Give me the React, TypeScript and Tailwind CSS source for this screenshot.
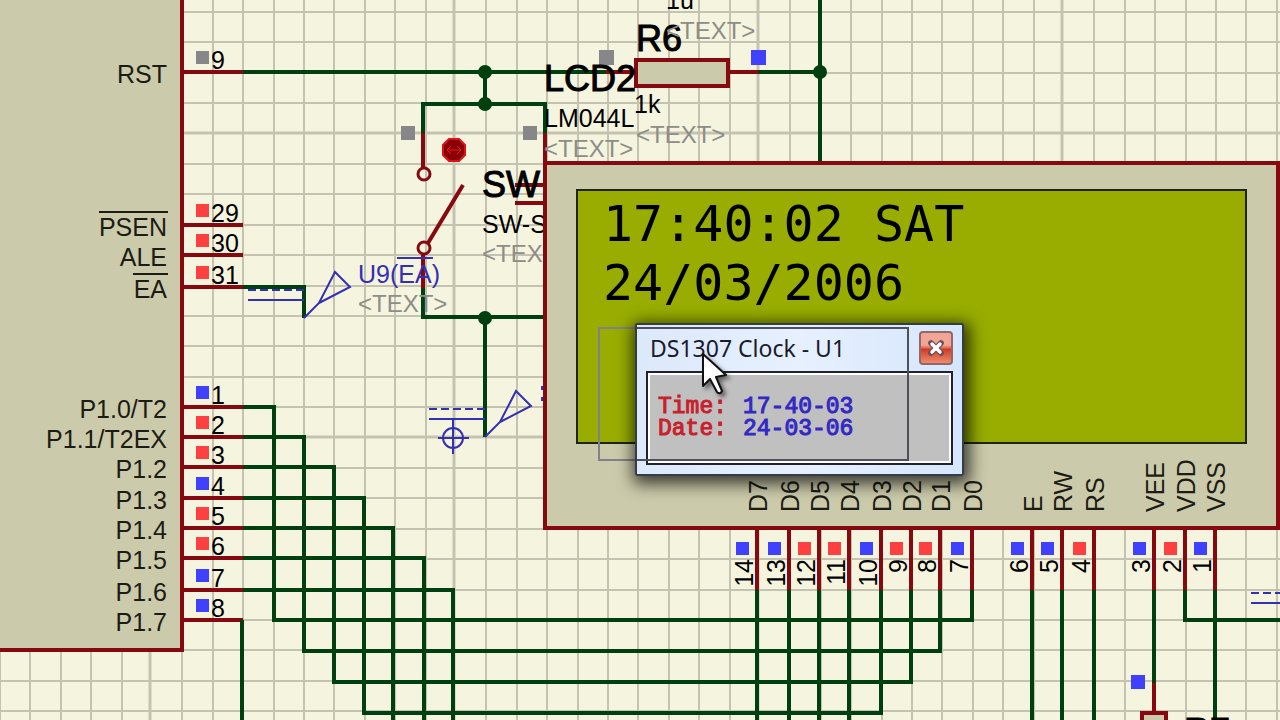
import { X } from 'lucide-react';

const WIRE = '#004010';
const PIN = '#86090f';
const PROBE = '#3430b4';
const LABEL_FONT = "font-['Liberation_Sans',Arial,sans-serif]";

type Level = 'high' | 'low' | 'float';

const LEVEL_COLOR: Record<Level, string> = {
  high: '#ff4040',
  low: '#4040ff',
  float: '#87878a',
};

const mcuPins: { name: string; num: string; y: number; level: Level; bar?: number }[] = [
  { name: 'RST', num: '9', y: 72, level: 'float' },
  { name: 'PSEN', num: '29', y: 225, level: 'high', bar: 69 },
  { name: 'ALE', num: '30', y: 255, level: 'high' },
  { name: 'EA', num: '31', y: 287, level: 'high', bar: 35 },
  { name: 'P1.0/T2', num: '1', y: 407, level: 'low' },
  { name: 'P1.1/T2EX', num: '2', y: 437, level: 'high' },
  { name: 'P1.2', num: '3', y: 467, level: 'high' },
  { name: 'P1.3', num: '4', y: 498, level: 'low' },
  { name: 'P1.4', num: '5', y: 528, level: 'high' },
  { name: 'P1.5', num: '6', y: 558, level: 'high' },
  { name: 'P1.6', num: '7', y: 590, level: 'low' },
  { name: 'P1.7', num: '8', y: 620, level: 'low' },
];

const lcdPins: { name: string; num: string; x: number; level: Level }[] = [
  { name: 'D7', num: '14', x: 757, level: 'low' },
  { name: 'D6', num: '13', x: 789, level: 'low' },
  { name: 'D5', num: '12', x: 819, level: 'high' },
  { name: 'D4', num: '11', x: 849, level: 'high' },
  { name: 'D3', num: '10', x: 881, level: 'low' },
  { name: 'D2', num: '9', x: 911, level: 'high' },
  { name: 'D1', num: '8', x: 940, level: 'high' },
  { name: 'D0', num: '7', x: 972, level: 'low' },
  { name: 'E', num: '6', x: 1032, level: 'low' },
  { name: 'RW', num: '5', x: 1062, level: 'low' },
  { name: 'RS', num: '4', x: 1094, level: 'high' },
  { name: 'VEE', num: '3', x: 1154, level: 'low' },
  { name: 'VDD', num: '2', x: 1185, level: 'high' },
  { name: 'VSS', num: '1', x: 1215, level: 'low' },
];

const wires = [
  'M243 72H606',
  'M758 72H820',
  'M820 0V163',
  'M485 72V104',
  'M423 133V104H545V133',
  'M423 288V317H545',
  'M485 317V437',
  'M243 287H304V318',
  // data bus from port 1
  'M243 407H274V620H972V590',
  'M243 437H304V651H940V590',
  'M243 467H334V682H911V590',
  'M243 498H364V713H881V590',
  'M243 528H393V2000',
  'M243 558H424V2000',
  'M243 590H453V2000',
  'M242 620V2000',
  // lcd side
  'M757 590V2000',
  'M789 590V2000',
  'M819 590V2000',
  'M849 590V2000',
  'M1032 590V2000',
  'M1062 590V2000',
  'M1094 590V2000',
  'M1154 590V683',
  'M1185 590V620H4000',
  'M1215 590V2000',
];

const junctions = [
  [485, 72],
  [485, 104],
  [485, 318],
  [820, 72],
];

function Grid() {
  const cols = Array.from({ length: 130 }, (_, i) => i);
  const rows = Array.from({ length: 65 }, (_, i) => i);
  return (
    <g stroke="#c4c3b2">
      {cols.map((i) => {
        const major = i % 10 === 5;
        const x = Math.round(i * 30.4) - (major ? 2 : 0);
        return <line key={i} x1={x} x2={x} y1="0" y2="2000" strokeWidth={major ? 3 : 2} />;
      })}
      {rows.map((i) => {
        const major = i % 10 === 4;
        const y = Math.round(12 + i * 30.4) - (major ? 1 : 0);
        return <line key={i} x1="0" x2="4000" y1={y} y2={y} strokeWidth={major ? 3 : 2} />;
      })}
    </g>
  );
}

function State({ x, y, level, size = 13 }: { x: number; y: number; level: Level; size?: number }) {
  return <rect x={x - 6} y={y - 6} width={size} height={size} fill={LEVEL_COLOR[level]} />;
}

function Placeholder({ x, y }: { x: number; y: number }) {
  return (
    <text x={x} y={y} className="text-[24px]" fill="#8d8d87">
      {'<TEXT>'}
    </text>
  );
}

function RefName({ x, y, children }: { x: number; y: number; children: string }) {
  return (
    <text x={x} y={y} className="text-[36px]" stroke="#000" strokeWidth="1">
      {children}
    </text>
  );
}

// voltage probe, its tip sits on (x, y)
function Probe({ x, y }: { x: number; y: number }) {
  return (
    <g transform={`translate(${x} ${y})`} stroke={PROBE} strokeWidth="2" fill="none">
      <path d="M-56 -28H0" strokeDasharray="8 4" />
      <path d="M-56 -18H0" />
      <path d="M0 0L15 -15L31 -46L46 -31L15 -15" />
    </g>
  );
}

function Microcontroller() {
  return (
    <g>
      <rect x="-10" y="-10" width="192" height="660" fill="#cbcaab" stroke={PIN} strokeWidth="4" />
      {mcuPins.map((p) => (
        <g key={p.num}>
          <text x="167" y={p.y + 11} textAnchor="end" fill="#1c1c14">
            {p.name}
          </text>
          {p.bar && <path d={`M${168 - p.bar} ${p.y - 13}h${p.bar}`} stroke="#1c1c14" strokeWidth="2" />}
          <path d={`M182 ${p.y}H243`} stroke={PIN} strokeWidth="4" />
          <State x={202} y={p.y - 15} level={p.level} />
          <text x="211" y={p.y - 3}>
            {p.num}
          </text>
        </g>
      ))}
    </g>
  );
}

function Switch() {
  return (
    <g>
      <g stroke={PIN} strokeWidth="4" fill="none">
        <path d="M423 133V168M423 254V288M545 133V163M515 185H545M515 203H545" />
        <path d="M428 243L463 185" />
        <circle cx="424" cy="174" r="6" strokeWidth="3" />
        <circle cx="424" cy="248" r="6" strokeWidth="3" />
      </g>
      <path d="M449 139H459L465 145V155L459 161H449L443 155V145Z" fill="#870008" stroke="#e0101a" strokeWidth="2" />
      <path d="M447 150H461M451 146L447 150L451 154M457 146L461 150L457 154" stroke="#f0141e" strokeWidth="1" fill="none" />
      <State x={407} y={132} level="float" size={14} />
      <State x={529} y={132} level="float" size={14} />
      <RefName x={482} y={197}>SW</RefName>
      <text x="482" y="233">SW-SPDT</text>
      <Placeholder x={482} y={262} />
    </g>
  );
}

function Lcd() {
  return (
    <g>
      <rect x="545" y="163" width="733" height="365" fill="#cbcaab" stroke={PIN} strokeWidth="4" />
      <rect x="577" y="190" width="669" height="253" fill="#98ad00" stroke="#20240a" strokeWidth="2" />
      <g className="font-['DejaVu_Sans_Mono',monospace] text-[50px] whitespace-pre">
        <text x="603" y="241">17:40:02 SAT</text>
        <text x="603" y="300">24/03/2006</text>
      </g>
      {lcdPins.map((p) => (
        <g key={p.num}>
          <path d={`M${p.x} 528V590`} stroke={PIN} strokeWidth="4" />
          <State x={p.x - 15} y={548} level={p.level} />
          <text transform={`translate(${p.x + 10} 512) rotate(-90)`} fill="#1c1c14">
            {p.name}
          </text>
          <text transform={`translate(${p.x - 4} 559) rotate(-90)`} textAnchor="end">
            {p.num}
          </text>
        </g>
      ))}
    </g>
  );
}

function Resistors() {
  return (
    <g>
      <path d="M606 72H635M728 72H758M1154 683V712" stroke={PIN} strokeWidth="4" />
      <rect x="636" y="60" width="92" height="26" fill="#cbcaab" stroke={PIN} strokeWidth="4" />
      <rect x="1142" y="713" width="24" height="92" fill="#cbcaab" stroke={PIN} strokeWidth="4" />
      <State x={605} y={56} level="float" size={15} />
      <State x={757} y={56} level="low" size={15} />
      <State x={1137} y={681} level="low" size={14} />
      <RefName x={636} y={51}>R6</RefName>
      <text x="634" y="113">1k</text>
      <text x="666" y="9">1u</text>
      <Placeholder x={666} y={39} />
      <Placeholder x={636} y={143} />
      <RefName x={1184} y={744}>R7</RefName>
    </g>
  );
}

function Schematic() {
  return (
    <svg className={`block h-screen w-full text-[25px] ${LABEL_FONT}`} role="img" aria-label="Schematic">
      <Grid />
      <Microcontroller />
      <path d={wires.join('')} stroke={WIRE} strokeWidth="4" fill="none" />
      {junctions.map(([x, y]) => (
        <circle key={`${x}-${y}`} cx={x} cy={y} r="7" fill={WIRE} />
      ))}
      <Switch />
      <Resistors />
      <RefName x={544} y={91}>LCD2</RefName>
      <text x="544" y="127">LM044L</text>
      <Placeholder x={544} y={157} />
      <Probe x={304} y={318} />
      <Probe x={485} y={437} />
      <text x="358" y="283" fill={PROBE}>
        U9(EA)
      </text>
      <path d="M397 258H433" stroke={PROBE} strokeWidth="2" />
      <Placeholder x={358} y={312} />
      <g stroke={PROBE} strokeWidth="2" fill="none">
        <circle cx="453" cy="438" r="10" />
        <path d="M438 438H469M453 420V454" />
        <path d="M541 388h4M541 399h4" strokeWidth="4" />
        <path d="M1251 593H4000" strokeDasharray="8 4" />
        <path d="M1251 603H4000" />
      </g>
      <Lcd />
    </svg>
  );
}

function ClockWindow() {
  return (
    <section
      aria-labelledby="clock-title"
      className="absolute top-[323px] left-[635px] w-[329px] rounded-xs border-2 border-[#343c48] bg-linear-to-r from-[#dce9fb] via-[#e6f0ff] to-[#d6e6fc] px-[9px] pb-[9px] shadow-[2px_4px_16px_4px_rgba(0,0,0,0.7)]"
    >
      <header className="flex h-[46px] items-center justify-between pl-1">
        <h2 id="clock-title" className="font-['Noto_Sans','Open_Sans',sans-serif] text-[23px] whitespace-nowrap text-[#1b1b2c]">
          DS1307 Clock - U1
        </h2>
        <button
          aria-label="Close"
          className="flex size-[34px] items-center justify-center rounded-sm border-2 border-[#8f6a6c] bg-linear-to-b from-[#f3a595] from-40% via-[#cf3c24] via-55% to-[#f08a6c]"
        >
          <span className="relative flex size-4 items-center justify-center">
            <X className="absolute size-5 text-[#6a5058]" strokeWidth={7} />
            <X className="absolute size-4 text-white" strokeWidth={5} />
          </span>
        </button>
      </header>
      <div className="h-[94px] border-2 border-[#22222a] bg-white p-0.5">
        <dl className="grid h-full grid-cols-[85px_1fr] content-center bg-[#c0c0c0] pl-2 font-['Liberation_Mono','Courier_New',monospace] text-[23px] leading-[22px] [-webkit-text-stroke:1px]">
          <dt className="text-[#c8202c]">Time:</dt>
          <dd className="text-[#3228c4]">17-40-03</dd>
          <dt className="text-[#c8202c]">Date:</dt>
          <dd className="text-[#3228c4]">24-03-06</dd>
        </dl>
      </div>
      {/* part of the drag frame that crosses the window */}
      <div className="absolute top-[2px] left-0 h-[134px] w-[272px] border-y-2 border-r-2 border-[#50505a]" />
    </section>
  );
}

function Cursor() {
  return (
    <svg className="absolute top-[351px] left-[700px] h-12 w-8 drop-shadow-[3px_3px_2px_rgba(0,0,0,0.5)]" viewBox="0 0 32 48" aria-hidden="true">
      <path d="M3 3V35L10 28L17 41Q20 44 22 40L16 26L26 24Z" fill="#fff" stroke="#111" strokeWidth="2" strokeLinejoin="round" />
    </svg>
  );
}

export default function App() {
  return (
    <main className="relative min-h-screen overflow-hidden bg-[#f5f4de]">
      <Schematic />
      {/* outline of the window while it is dragged */}
      <div className="absolute top-[327px] left-[598px] h-[134px] w-[311px] border-2 border-[#82808c]" />
      <ClockWindow />
      <Cursor />
    </main>
  );
}
